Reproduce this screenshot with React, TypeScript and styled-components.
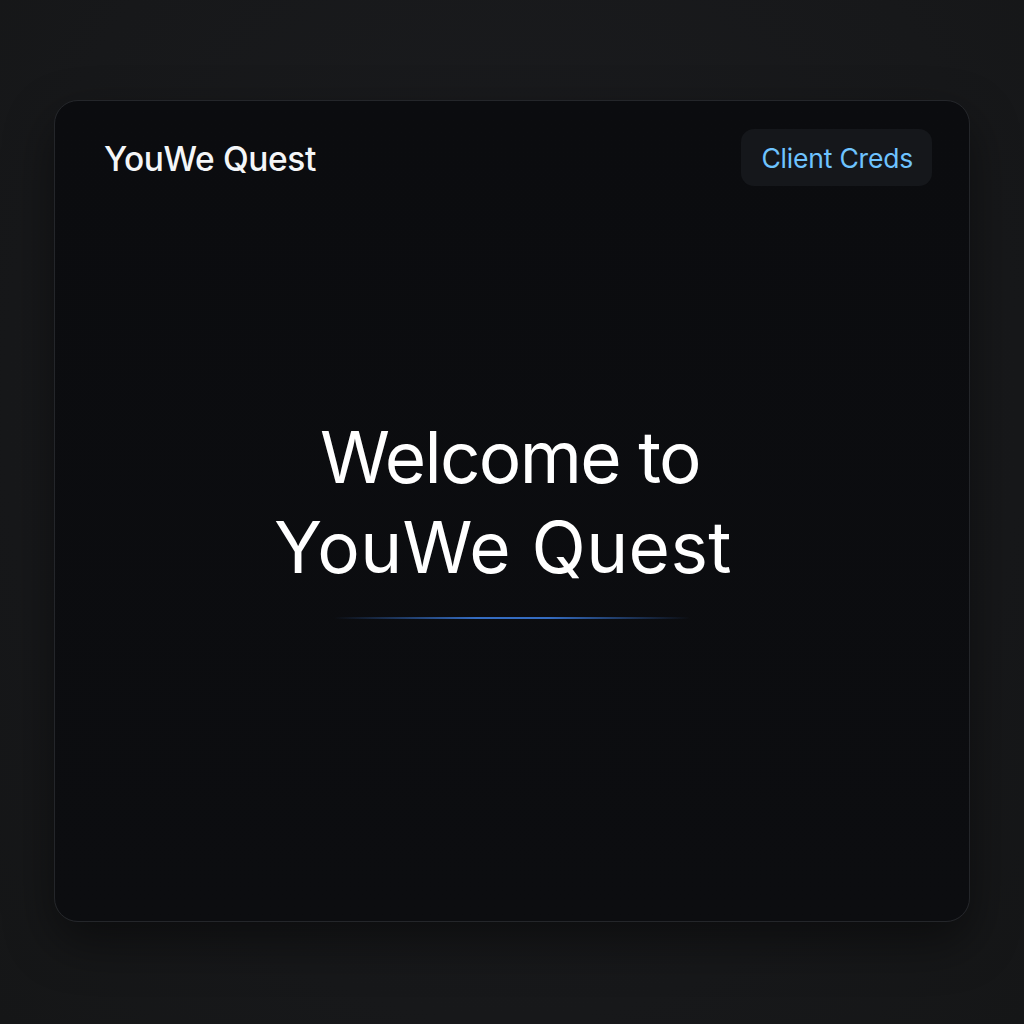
import React from "react";
import styled, { createGlobalStyle } from "styled-components";

const Global = createGlobalStyle`
  html, body {
    margin: 0;
    padding: 0;
    background: #18191b;
  }
  body {
    font-family: Inter, "Liberation Sans", Arial, sans-serif;
  }
`;

const Page = styled.div`
  width: 1024px;
  height: 1024px;
  box-sizing: border-box;
  padding: 100px 54px 102px 54px;
  background: radial-gradient(ellipse at 50% 40%, #1b1c1f 0%, #17181a 70%, #151617 100%);
  display: flex;
`;

const Card = styled.div`
  flex: 1;
  display: flex;
  flex-direction: column;
  background: linear-gradient(180deg, #0b0c0f 0%, #0c0d10 100%);
  border: 1px solid #24262a;
  border-radius: 24px;
  box-shadow: 0 20px 50px rgba(0, 0, 0, 0.45);
  overflow: hidden;
`;

const Header = styled.header`
  display: flex;
  align-items: center;
  justify-content: space-between;
  padding: 28px 37px 0 49px;
`;

const Brand = styled.div`
  font-family: Inter, "Liberation Sans", Arial, sans-serif;
  font-size: 33.5px;
  font-weight: 500;
  color: #f4f6f8;
  letter-spacing: -0.4px;
  padding-top: 3px;
`;

const CredsButton = styled.button`
  height: 57px;
  padding: 0 19px 0 20px;
  border: none;
  border-radius: 13px;
  background: #15171b;
  color: #6ec3ff;
  font-family: Inter, "Liberation Sans", Arial, sans-serif;
  font-size: 26.5px;
  font-weight: 400;
  letter-spacing: -0.2px;
  cursor: pointer;
`;

const Main = styled.main`
  flex: 1;
  display: flex;
  flex-direction: column;
  align-items: center;
  padding-top: 226px;
`;

const Title = styled.h1`
  margin: 0;
  display: flex;
  flex-direction: column;
  align-items: center;
  font-family: Inter, "Liberation Sans", Arial, sans-serif;
  font-weight: 400;
  font-size: 71px;
  line-height: 90px;
  color: #ffffff;
`;

const TitleLine = styled.span<{ $tracking: number; $nudge?: number }>`
  display: block;
  letter-spacing: ${(p) => p.$tracking}px;
  margin-right: ${(p) => p.$nudge ?? 0}px;
  white-space: nowrap;
`;

const Divider = styled.div`
  margin-top: 25px;
  width: 356px;
  height: 2px;
  background: linear-gradient(
    90deg,
    rgba(60, 120, 220, 0) 0%,
    rgba(60, 125, 225, 0.85) 40%,
    rgba(60, 125, 225, 0.85) 60%,
    rgba(60, 120, 220, 0) 100%
  );
`;

export default function App() {
  return (
    <>
      <Global />
      <Page>
        <Card>
          <Header>
            <Brand>YouWe Quest</Brand>
            <CredsButton>Client Creds</CredsButton>
          </Header>
          <Main>
            <Title>
              <TitleLine $tracking={-1.7} $nudge={4}>Welcome to</TitleLine>
              <TitleLine $tracking={0.4} $nudge={18}>YouWe Quest</TitleLine>
            </Title>
            <Divider />
          </Main>
        </Card>
      </Page>
    </>
  );
}
